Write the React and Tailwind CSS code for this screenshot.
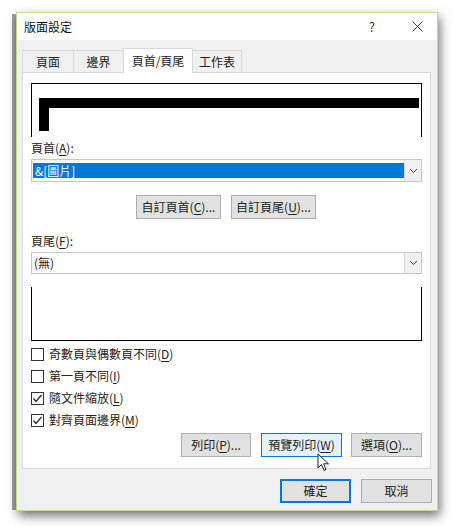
import React from "react";

const F = { fontFamily: '"Noto Sans CJK TC", "Noto Sans", sans-serif' };

function U({ children }) {
  return <span className="underline underline-offset-2">{children}</span>;
}

function Chevron() {
  return (
    <svg width="9" height="6" viewBox="0 0 9 6">
      <polyline points="1,1 4.5,4.5 8,1" fill="none" stroke="#444" strokeWidth="1" />
    </svg>
  );
}

function Btn({ children, w, className = "" }) {
  return (
    <div
      className={`h-[24px] ${w} flex items-center justify-center border border-[#adadad] bg-[#e1e1e1] text-[12px] text-[#222] ${className}`}
    >
      {children}
    </div>
  );
}

function Check({ checked, children }) {
  return (
    <div className="h-[22px] flex items-center">
      <div className="w-[13px] h-[13px] border border-[#333] bg-white flex items-center justify-center">
        {checked && (
          <svg width="11" height="11" viewBox="0 0 11 11">
            <polyline points="1.5,5.5 4,8.5 9.5,2" fill="none" stroke="#222" strokeWidth="1.2" />
          </svg>
        )}
      </div>
      <span className="ml-[5px] text-[12px] text-[#222]">{children}</span>
    </div>
  );
}

export default function App() {
  return (
    <div className="w-[454px] h-[527px] bg-white relative overflow-hidden" style={F}>
      <div className="absolute left-[12px] top-[14px] w-[4px] h-[496px] bg-[#a0a0a0]" />
      <div className="pt-[12px] pl-[16px]">
        <div className="w-[422px] h-[499px] border border-[#c3da8c] bg-[#f0f0f0] flex flex-col shadow-[2px_5px_10px_rgba(0,0,0,0.55)] relative">
          {/* title bar */}
          <div className="h-[27px] bg-white flex items-center pl-[7px] pr-[14px] text-[12px] text-[#111]">
            <span>版面設定</span>
            <span className="ml-auto text-[13px] text-[#333] mr-[37px]">?</span>
            <svg width="11" height="11" viewBox="0 0 11 11">
              <path d="M0.5 0.5 L10.5 10.5 M10.5 0.5 L0.5 10.5" stroke="#333" strokeWidth="1" />
            </svg>
          </div>
          {/* body */}
          <div className="flex-1 px-[5px] pt-[8px] flex flex-col">
            {/* tabs */}
            <div className="flex items-end h-[24px] text-[12px] text-[#222]">
              <div className="w-[51px] h-[22px] border-t border-l border-[#d9d9d9] flex items-center justify-center">頁面</div>
              <div className="w-[50px] h-[22px] border-t border-l border-[#d9d9d9] flex items-center justify-center">邊界</div>
              <div className="w-[70px] h-[25px] border-t border-l border-r border-[#d9d9d9] bg-white flex items-center justify-center -mb-px relative z-10">頁首/頁尾</div>
              <div className="w-[49px] h-[22px] border-t border-r border-[#d9d9d9] flex items-center justify-center">工作表</div>
            </div>
            {/* panel */}
            <div className="w-[409px] h-[397px] border border-[#d9d9d9] bg-white pl-[8px] flex flex-col">
              <div className="mt-[10px] w-[391px] h-[54px] border-t border-l border-r border-black pl-[7px] pt-[14px]">
                <div className="w-[380px] h-[10px] bg-black" />
                <div className="w-[10px] h-[23px] bg-black" />
              </div>
              <div className="mt-[3px] h-[16px] text-[12px] leading-[16px] text-[#222]">
                頁首(<U>A</U>):
              </div>
              <div className="mt-[3px] w-[391px] h-[23px] border border-[#c6c6c6] bg-white flex items-stretch">
                <div className="flex-1 flex items-center pl-[1px]">
                  <div className="w-full h-[15px] bg-[#0078d7] text-white text-[12px] leading-[15px] pl-[2px]">&amp;[圖片]</div>
                </div>
                <div className="w-[17px] bg-[#f0f0f0] border-l border-[#d6d6d6] flex items-center justify-center">
                  <Chevron />
                </div>
              </div>
              <div className="mt-[13px] flex pl-[105px] gap-[10px]">
                <Btn w="w-[85px]">自訂頁首(<U>C</U>)...</Btn>
                <Btn w="w-[85px]">自訂頁尾(<U>U</U>)...</Btn>
              </div>
              <div className="mt-[14px] h-[16px] text-[12px] leading-[16px] text-[#222]">
                頁尾(<U>F</U>):
              </div>
              <div className="mt-[3px] w-[391px] h-[22px] border border-[#c6c6c6] bg-white flex items-stretch">
                <div className="flex-1 flex items-center pl-[2px] text-[12px] text-[#222]">(無)</div>
                <div className="w-[17px] bg-[#f0f0f0] border-l border-[#d6d6d6] flex items-center justify-center">
                  <Chevron />
                </div>
              </div>
              <div className="mt-[13px] w-[391px] h-[54px] border-l border-r border-b border-black" />
              <div className="mt-[2px] flex flex-col">
                <Check>奇數頁與偶數頁不同(<U>D</U>)</Check>
                <Check>第一頁不同(<U>I</U>)</Check>
                <Check checked>隨文件縮放(<U>L</U>)</Check>
                <Check checked>對齊頁面邊界(<U>M</U>)</Check>
              </div>
              <div className="mt-[2px] flex pl-[150px] gap-[10px]">
                <Btn w="w-[70px]">列印(<U>P</U>)...</Btn>
                <Btn w="w-[81px]" className="!bg-[#e5f1fb] !border-[#0078d7]">預覽列印(<U>W</U>)</Btn>
                <Btn w="w-[71px]" className="-ml-[1px]">選項(<U>O</U>)...</Btn>
              </div>
            </div>
            {/* ok / cancel */}
            <div className="mt-[10px] flex justify-end gap-[10px]">
              <Btn w="w-[71px]" className="!border-[#0078d7] border-2">確定</Btn>
              <Btn w="w-[71px]">取消</Btn>
            </div>
          </div>
        </div>
      </div>
      {/* cursor */}
      <svg className="absolute left-[317px] top-[453px]" width="14" height="20" viewBox="0 0 14 20">
        <path d="M1 1 L1 15 L4.5 11.5 L7 17.5 L9 16.6 L6.6 10.8 L11.5 10.8 Z" fill="white" stroke="#222" strokeWidth="1" strokeLinejoin="round" />
      </svg>
    </div>
  );
}
